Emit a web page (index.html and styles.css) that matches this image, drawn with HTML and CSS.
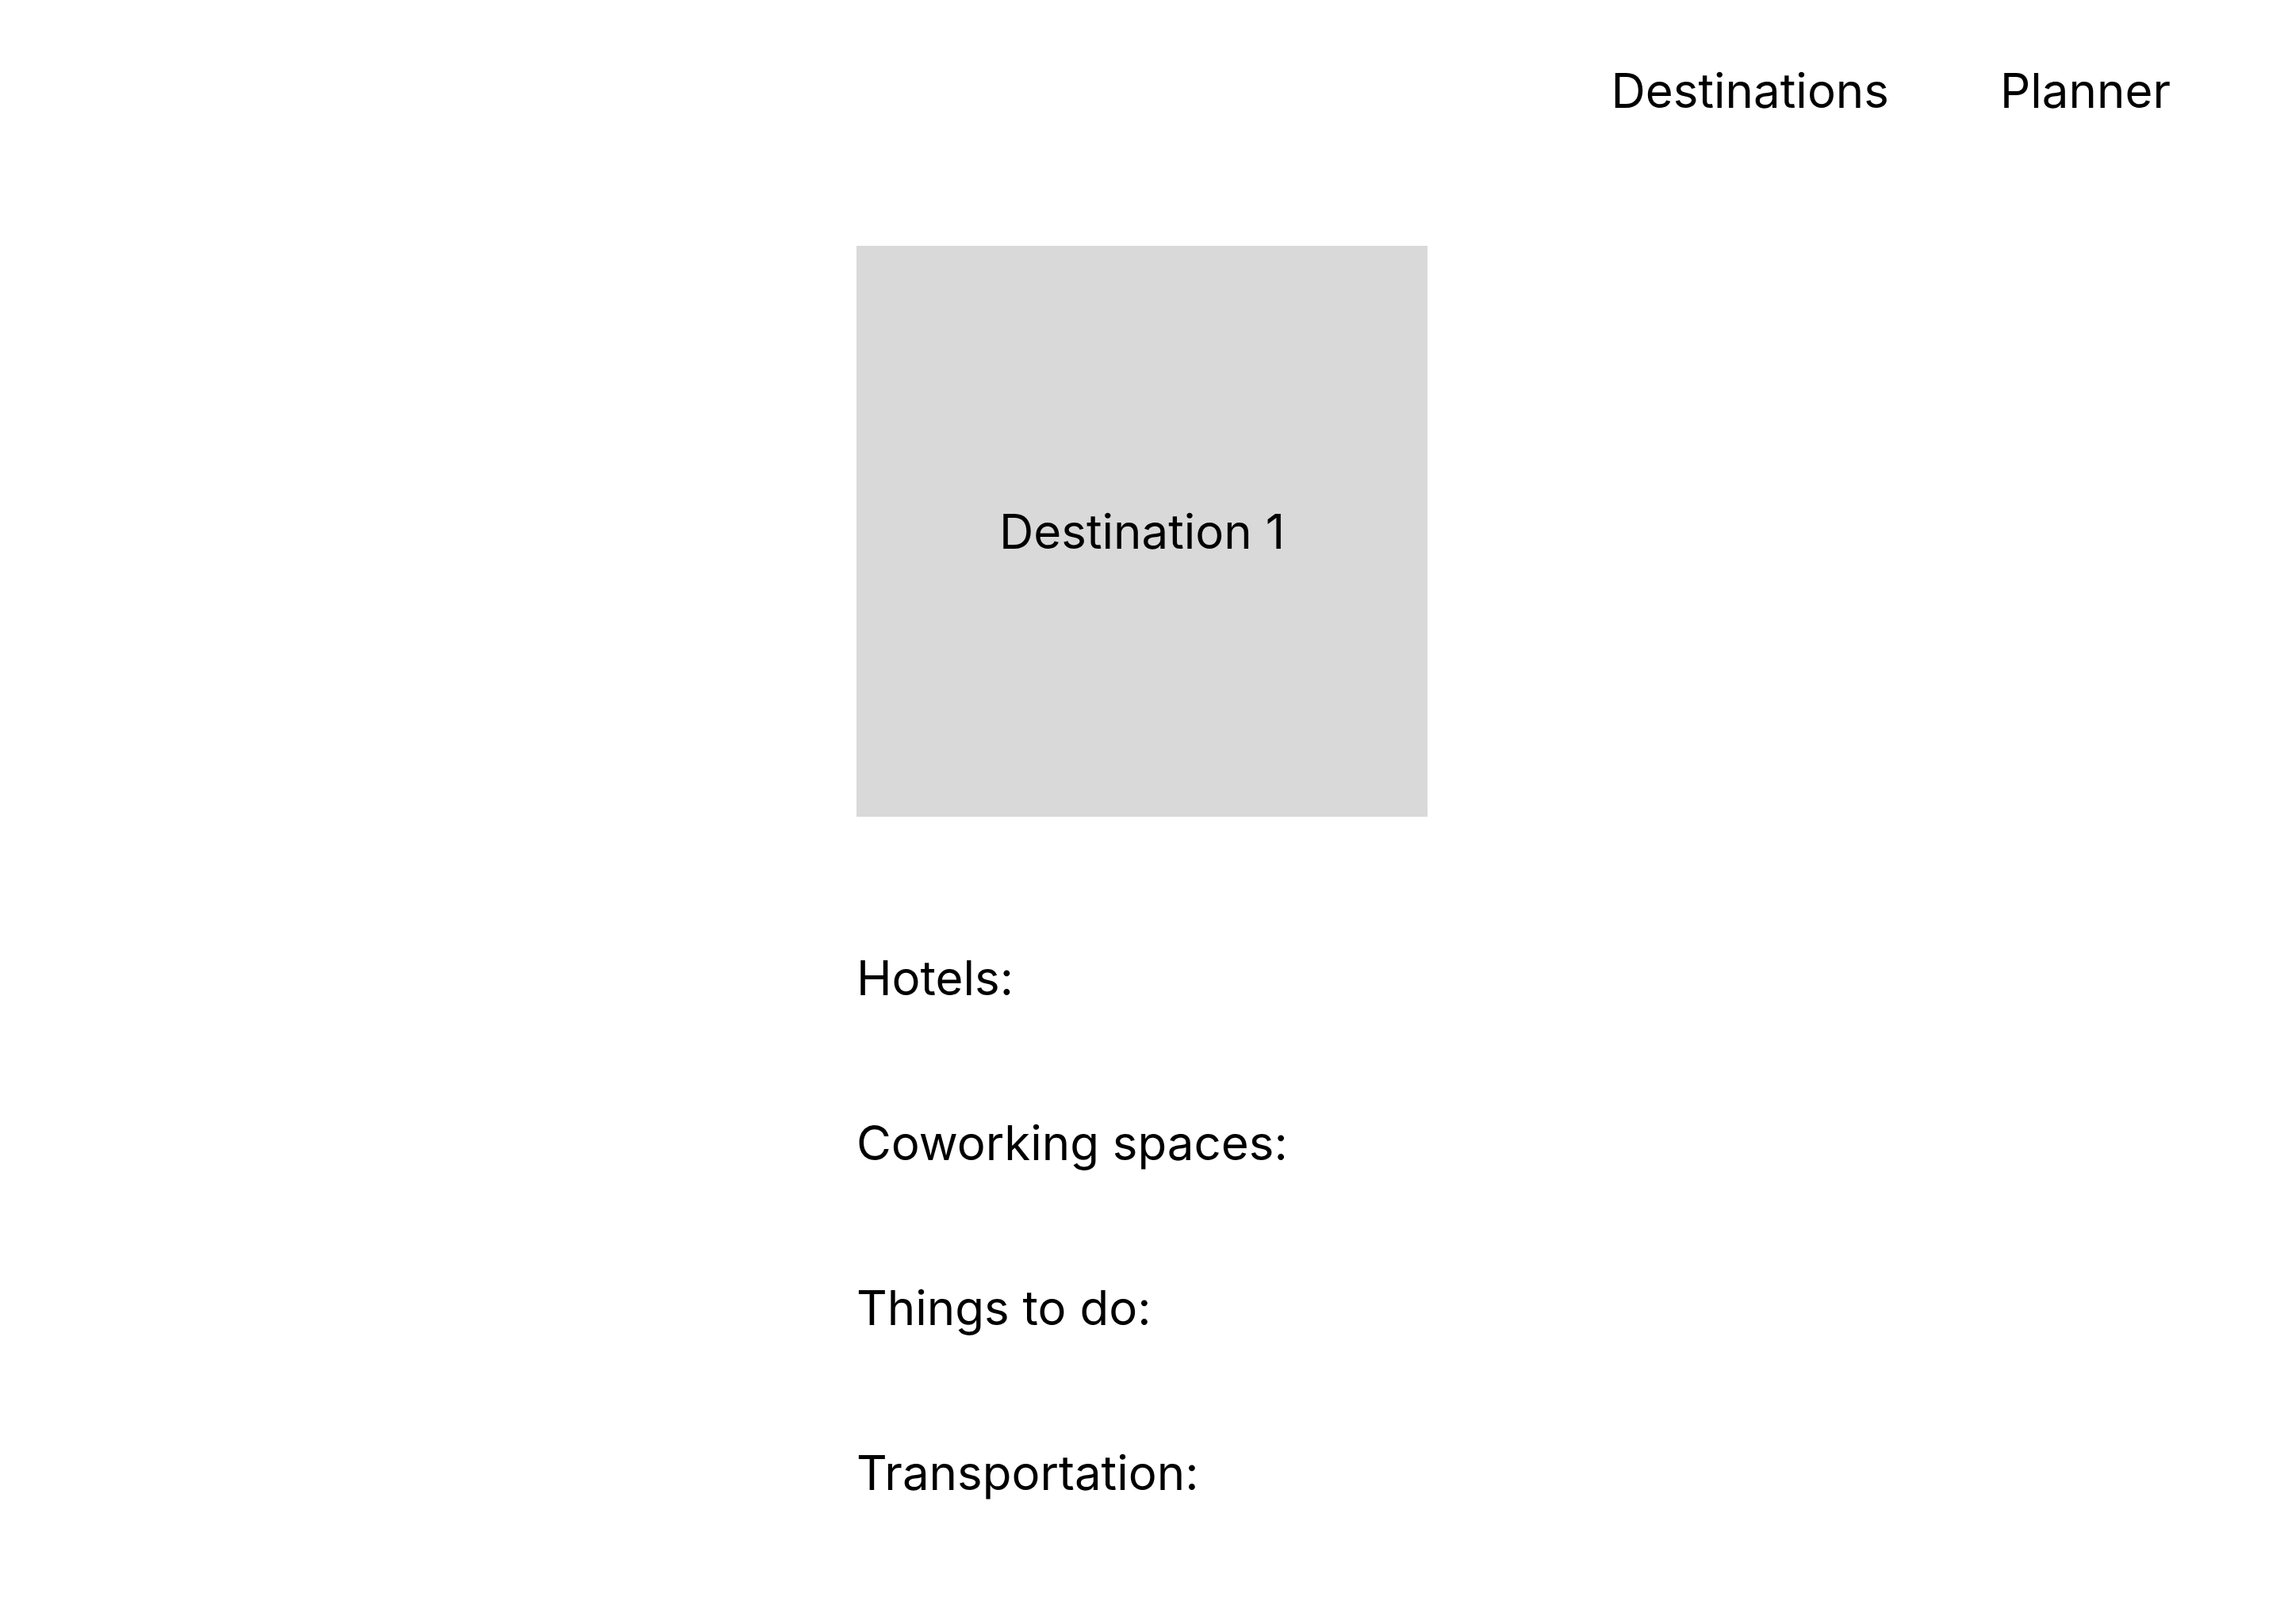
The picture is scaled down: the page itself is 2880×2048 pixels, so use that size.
FILE: index.html
```html
<!DOCTYPE html>
<html lang="en">
<head>
<meta charset="utf-8">
<title>Destination 1</title>
<link rel="stylesheet" href="styles.css">
</head>
<body>
<header class="topbar">
  <nav class="nav">
    <a class="nav-link" href="#">Destinations</a>
    <a class="nav-link" href="#">Planner</a>
  </nav>
</header>
<main class="content">
  <div class="hero"><span>Destination 1</span></div>
  <ul class="sections">
    <li>Hotels:</li>
    <li>Coworking spaces:</li>
    <li>Things to do:</li>
    <li>Transportation:</li>
  </ul>
</main>
</body>
</html>
```
FILE: styles.css
```css
html, body {
  margin: 0;
  padding: 0;
  background: #ffffff;
}
body {
  font-family: Inter, "Noto Sans", sans-serif;
  font-size: 60px;
  color: #000000;
  width: 2880px;
  min-height: 2048px;
}
.topbar {
  display: flex;
  justify-content: flex-end;
  padding: 78px 143px 0 0;
}
.nav {
  display: flex;
  gap: 140px;
}
.nav-link {
  color: #000;
  text-decoration: none;
  line-height: 72px;
}
.content {
  display: flex;
  flex-direction: column;
  padding-left: 1080px;
  padding-top: 160px;
}
.hero {
  width: 720px;
  height: 720px;
  background: #d9d9d9;
  display: flex;
  align-items: center;
  justify-content: center;
}
.sections {
  list-style: none;
  margin: 0;
  padding: 167px 0 0 0;
  display: flex;
  flex-direction: column;
  gap: 136px;
}
.sections li {
  line-height: 72px;
}
```
